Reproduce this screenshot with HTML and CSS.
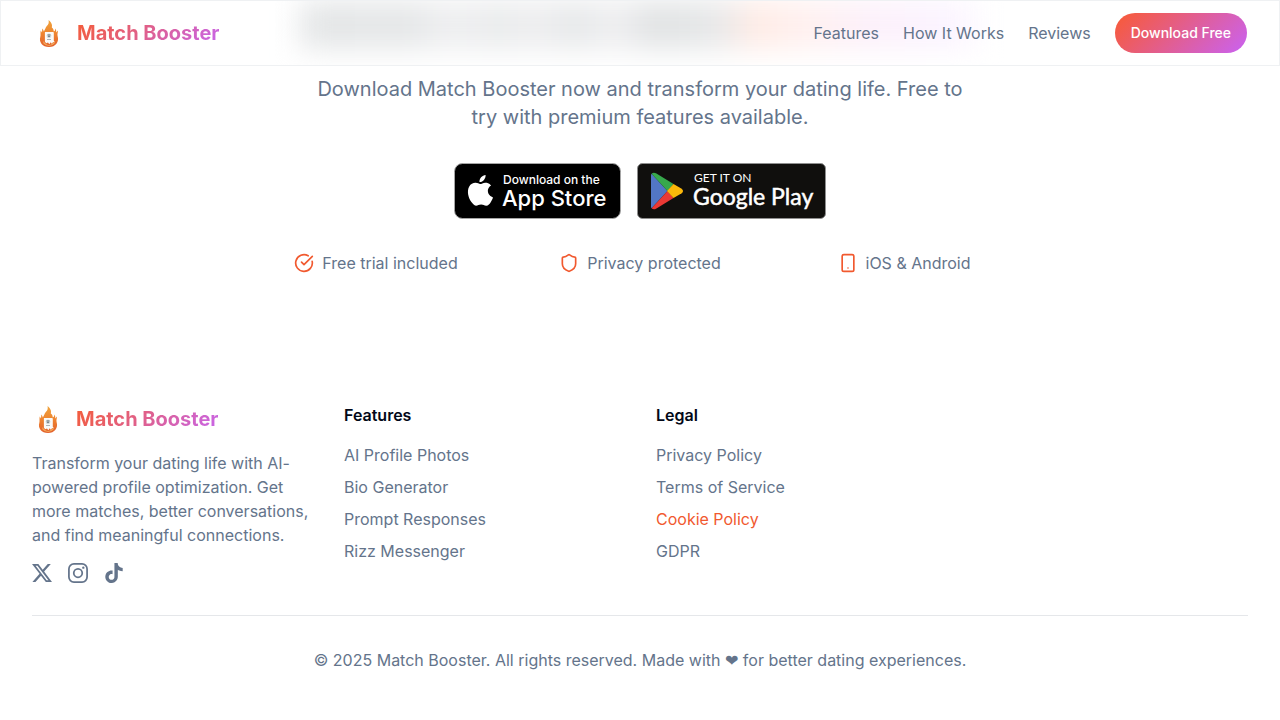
FILE: index.html
```html
<!DOCTYPE html>
<html lang="en">
<head>
<meta charset="utf-8">
<meta name="viewport" content="width=device-width, initial-scale=1">
<title>Match Booster</title>
<link rel="stylesheet" href="styles.css">
</head>
<body>
<svg class="sprite" aria-hidden="true">
  <defs>
    <linearGradient id="fire" x1="0" y1="0" x2="0" y2="1"><stop offset="0" stop-color="#f0a43c"/><stop offset=".5" stop-color="#ee8430"/><stop offset="1" stop-color="#e2602c"/></linearGradient>
    <symbol id="flame" viewBox="0 0 32 32">
      <path fill="url(#fire)" d="M15.600 3C18.800 6 19.500 8 18.800 10.500C20.200 11.500 20.800 13 20.800 14.500C22 14 22.300 13 22.300 11.500C23.300 13 23.400 14 23 15.500L25 13.500C24.800 16 24.200 17 24.600 19C26.500 25 22.500 30 16 30C9.500 30 5.700 25 7.300 20C7.900 18 7.200 16 7.700 13.500L9 15.500L9.300 11.500C10.300 12.500 10.500 13.500 10.800 14.500C12.500 12 12.300 10.500 13.800 9C15.600 7.500 16 6 15.600 3Z"/>
      <path fill="#f3ab5c" d="M10 24l2 2 2 1.500 2 .7 2-.7 2-1.500 2-2-.5 2.500-2 1.500-3.500.9-3.500-.9-2-1.500z"/>
      <path fill="#fafaf9" d="M12 15h8q.8 0 .8.800v8l.8 1-1.600.4-1.300 1.500-1-1.500-1.400 2-1.300-1.700-1.700.8-1.400-1.500v-9q0-.8.100-.8z"/>
      <circle cx="16" cy="18.800" r="2.400" fill="#cfd6d9"/>
      <path fill="#66727b" d="M14.700 17.600h2.600v1h-2.600zM15.200 19h1.600v1h-1.600zM14 22h4v.5h-4z"/>
    </symbol>
  </defs>
</svg>

<header class="site-header">
  <div class="backdrop" aria-hidden="true"></div>
  <a class="brand" href="#"><svg class="brand-icon" aria-hidden="true"><use href="#flame"/></svg><span class="brand-name">Match Booster</span></a>
  <nav class="nav">
    <a href="#features">Features</a>
    <a href="#how">How It Works</a>
    <a href="#reviews">Reviews</a>
    <button class="download" type="button">Download Free</button>
  </nav>
</header>

<main class="cta">
  <p class="lead">Download Match Booster now and transform your dating life. Free to try with premium features available.</p>
  <div class="stores">
    <a class="store" href="#ios" aria-label="Download on the App Store">
      <svg width="167" height="56" viewBox="0 0 167 56">
        <rect x=".5" y=".5" width="166" height="55" rx="8" fill="#000" stroke="#a6a6a6"/>
        <path fill="#fff" transform="translate(10 8) scale(1.500)" d="M15.900 13.400c0-2.400 2-3.600 2.100-3.700-1.100-1.700-2.900-1.900-3.500-1.900-1.500-.2-2.900.9-3.700.9-.8 0-1.900-.9-3.200-.8C6 7.900 4.400 8.800 3.500 10.300c-1.800 3.100-.5 7.700 1.300 10.200.9 1.200 1.900 2.600 3.200 2.600 1.300-.1 1.800-.8 3.400-.8s2 .8 3.400.8 2.300-1.200 3.100-2.500c1-1.400 1.400-2.800 1.400-2.900 0 0-3.400-1.300-3.400-4.300zM13.300 6c.7-.9 1.200-2.100 1.100-3.300-1 0-2.300.7-3 1.500-.7.800-1.200 2-1.100 3.200 1.200.1 2.300-.6 3-1.400z"/>
        <text x="49" y="21" class="apple-small">Download on the</text>
        <text x="48" y="43" class="apple-large">App Store</text>
      </svg>
    </a>
    <a class="store" href="#android" aria-label="Get it on Google Play">
      <svg width="189" height="56" viewBox="0 0 189 56">
        <rect x=".5" y=".5" width="188" height="55" rx="5" fill="#100f0d" stroke="#8f8f8f"/>
        <path fill="#5276c5" d="M14 12.500v31q0 1 .6 1.700L30.500 28 14.600 10.800q-.6.700-.6 1.700z"/>
        <path fill="#37a84c" d="M14.600 10.800q1.800-1.800 4.400-.5L36.500 21 30.500 28z"/>
        <path fill="#ea3935" d="M14.600 45.200q1.800 1.800 4.400.5L36.500 35 30.500 28z"/>
        <path fill="#fbb80a" d="M36.500 21l8.200 4.700q2.700 2.300 0 4.600L36.500 35l-6.500-7z"/>
        <text x="57" y="19" class="play-small">GET IT ON</text>
        <text x="56" y="42" class="play-large">Google Play</text>
      </svg>
    </a>
  </div>
  <ul class="perks">
    <li><svg class="icon" viewBox="0 0 24 24" aria-hidden="true"><path d="M21.800 10A10 10 0 1 1 17 3.335"/><path d="m9 11 3 3L22 4"/></svg>Free trial included</li>
    <li><svg class="icon" viewBox="0 0 24 24" aria-hidden="true"><path d="M20 13c0 5-3.500 7.500-7.660 8.950a1 1 0 0 1-.67-.01C7.500 20.500 4 18 4 13V6a1 1 0 0 1 1-1c2 0 4.500-1.200 6.240-2.720a1.170 1.170 0 0 1 1.520 0C14.510 3.810 17 5 19 5a1 1 0 0 1 1 1z"/></svg>Privacy protected</li>
    <li><svg class="icon" viewBox="0 0 24 24" aria-hidden="true"><rect x="5" y="2" width="14" height="20" rx="2"/><path d="M12 18h.01"/></svg>iOS &amp; Android</li>
  </ul>
</main>

<footer class="footer">
  <div class="columns">
    <div class="about">
      <a class="brand" href="#"><svg class="brand-icon" aria-hidden="true"><use href="#flame"/></svg><span class="brand-name">Match Booster</span></a>
      <p>Transform your dating life with AI-powered profile optimization. Get more matches, better conversations, and find meaningful connections.</p>
      <div class="social">
        <a href="#x" aria-label="X"><svg viewBox="0 0 24 24"><path fill="currentColor" d="M18.900 1.150h3.680l-8.040 9.190L24 22.850h-7.410l-5.800-7.590-6.640 7.590H.47l8.600-9.830L0 1.150h7.590l5.250 6.940zm-1.290 19.500h2.040L6.480 3.240H4.300z"/></svg></a>
        <a href="#instagram" aria-label="Instagram"><svg viewBox="0 0 24 24" fill="none" stroke="currentColor" stroke-width="2.100"><rect x="1.100" y="1.100" width="21.800" height="21.800" rx="6"/><circle cx="12" cy="12" r="5.100"/><circle cx="18.400" cy="5.600" r="1.400" fill="currentColor" stroke="none"/></svg></a>
        <a href="#tiktok" aria-label="TikTok"><svg viewBox="0 0 24 24"><path fill="currentColor" d="M12.530.02C13.840 0 15.140.01 16.440 0c.08 1.530.63 3.090 1.750 4.170 1.120 1.110 2.700 1.620 4.240 1.790v4.030c-1.440-.05-2.890-.35-4.200-.97-.57-.26-1.100-.59-1.620-.93-.01 2.920.01 5.840-.02 8.750-.08 1.400-.54 2.790-1.350 3.940-1.310 1.920-3.580 3.170-5.910 3.210-1.430.08-2.860-.31-4.080-1.030-2.020-1.190-3.440-3.370-3.650-5.710-.02-.5-.03-1-.01-1.490.18-1.900 1.120-3.720 2.580-4.960 1.660-1.440 3.980-2.130 6.150-1.720.02 1.480-.04 2.960-.04 4.440-.99-.32-2.150-.23-3.020.37-.63.41-1.110 1.040-1.360 1.750-.21.51-.15 1.070-.14 1.610.24 1.640 1.820 3.020 3.500 2.870 1.120-.01 2.190-.66 2.770-1.610.19-.33.4-.67.41-1.060.1-1.790.06-3.570.07-5.360.01-4.030-.01-8.050.02-12.070z"/></svg></a>
      </div>
    </div>
    <div>
      <h3>Features</h3>
      <ul class="links">
        <li><a href="#photos">AI Profile Photos</a></li>
        <li><a href="#bio">Bio Generator</a></li>
        <li><a href="#prompts">Prompt Responses</a></li>
        <li><a href="#rizz">Rizz Messenger</a></li>
      </ul>
    </div>
    <div>
      <h3>Legal</h3>
      <ul class="links">
        <li><a href="#privacy">Privacy Policy</a></li>
        <li><a href="#terms">Terms of Service</a></li>
        <li><a class="active" href="#cookies">Cookie Policy</a></li>
        <li><a href="#gdpr">GDPR</a></li>
      </ul>
    </div>
  </div>
  <p class="copyright">© 2025 Match Booster. All rights reserved. Made with <span class="heart">❤</span> for better dating experiences.</p>
</footer>
</body>
</html>
```

FILE: styles.css
```css
* { box-sizing: border-box; }
body {
  margin: 0;
  background: #fff;
  color: #64748b;
  font-family: Inter, "DejaVu Sans", sans-serif;
  font-size: 16px;
  line-height: 24px;
}
a { color: inherit; text-decoration: none; }
ul { list-style: none; margin: 0; padding: 0; }
p, h3 { margin: 0; }
svg { display: block; }
.sprite { position: absolute; width: 0; height: 0; }

.site-header {
  position: sticky;
  top: 0;
  z-index: 1;
  display: flex;
  align-items: center;
  justify-content: space-between;
  padding: 12px 32px;
  border: 1px solid #eff1f3;
  background: #fff;
}
.backdrop {
  position: absolute;
  inset: 0;
  z-index: -1;
  overflow: hidden;
}
.backdrop::before {
  content: "";
  position: absolute;
  top: 0;
  bottom: 16px;
  left: 50%;
  width: 680px;
  transform: translateX(-50%);
  background: linear-gradient(90deg, #e4e6e7 0, #e5e7e8 110px, #efeff1 150px, #e9ebec 200px, #eeeef0 235px, #e6e8e9 275px, #efeff1 315px, #e0e2e3 355px, #e6e8e9 415px, #ffebe5 455px, #fff0ee 500px, #fcf0fa 570px, #fbf3ff 640px, #fdf9ff 680px);
  filter: blur(14px);
}
.brand { display: flex; align-items: center; gap: 12px; }
.brand-icon { width: 32px; height: 32px; }
.brand-name {
  font-size: 20px;
  line-height: 28px;
  font-weight: 700;
  color: transparent;
  background: linear-gradient(135deg, #f55c35, #c765ee);
  background-clip: text;
  -webkit-background-clip: text;
}
.nav { display: flex; align-items: center; gap: 24px; }
.download {
  height: 40px;
  padding: 0 16px;
  border: 0;
  border-radius: 20px;
  background: linear-gradient(135deg, #f95a33, #c962f3);
  color: #fff;
  font: 500 14px/20px Inter, sans-serif;
}

.cta {
  display: flex;
  flex-direction: column;
  align-items: center;
  padding: 9px 8px 80px;
}
.lead {
  max-width: 672px;
  font-size: 20px;
  line-height: 28px;
  text-align: center;
}
.stores { display: flex; gap: 16px; margin: 32px 0; }
.store text { fill: #fff; font-family: Inter, sans-serif; }
.store .apple-small { font-size: 12px; font-weight: 500; }
.store .apple-large { font-size: 22px; font-weight: 500; }
.store .play-small { font-family: Lato, sans-serif; font-size: 12px; }
.store .play-large { font-family: Lato, sans-serif; font-size: 23px; stroke: #fff; stroke-width: 0.5px; }
.perks {
  display: grid;
  grid-template-columns: repeat(3, 1fr);
  gap: 24px;
  width: 100%;
  max-width: 768px;
}
.perks li { display: flex; align-items: center; justify-content: center; gap: 8px; }
.icon {
  width: 20px;
  height: 20px;
  fill: none;
  stroke: #f1592f;
  stroke-width: 2;
  stroke-linecap: round;
  stroke-linejoin: round;
}

.footer { padding: 48px 32px; }
.columns {
  display: grid;
  grid-template-columns: repeat(4, 1fr);
  gap: 32px;
  padding-bottom: 32px;
  border-bottom: 1px solid #e5e7ea;
}
.about { display: flex; flex-direction: column; gap: 16px; }
.social { display: flex; gap: 16px; }
.social svg { width: 20px; height: 20px; }
h3 { margin-bottom: 16px; color: #020817; font-size: 16px; font-weight: 600; }
.links { display: grid; gap: 8px; }
.active { color: #f1592f; }
.copyright { padding-top: 32px; text-align: center; }
.heart { font-family: "DejaVu Sans", sans-serif; line-height: 1; }
```
